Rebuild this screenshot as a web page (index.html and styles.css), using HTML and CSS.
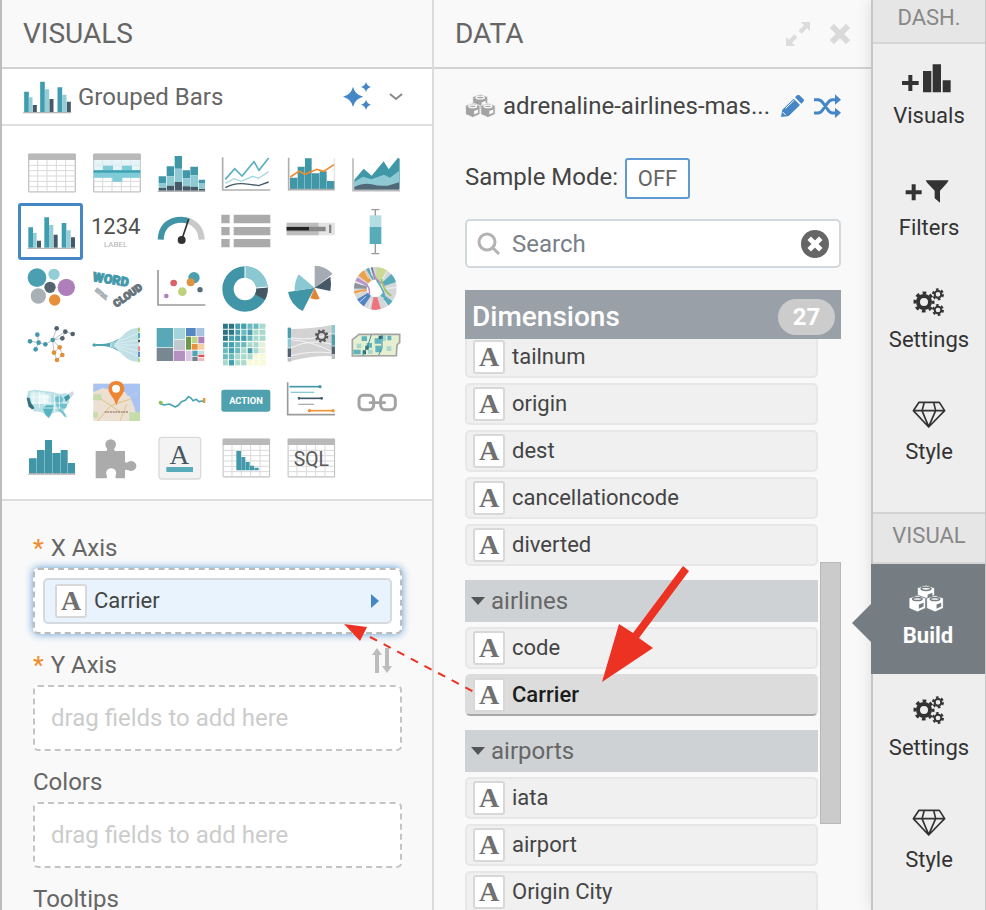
FILE: index.html
```html
<!DOCTYPE html>
<html lang="en">
<head>
<meta charset="utf-8">
<meta name="viewport" content="width=device-width, initial-scale=1">
<title>Visual Builder</title>
<link rel="stylesheet" href="styles.css">
</head>
<body>
<svg class="defs" aria-hidden="true">
  <defs>
    <symbol id="grouped" viewBox="52 212 146 102">
      <path fill="#3f9db0" d="M55 247h14v61H55zM103 217h14v91h-14zM155 234h14v74h-14z"/>
      <path fill="#94cdd6" d="M69 264h11v44H69zM117 240h13v68h-13zM169 256h13v52h-13z"/>
      <path fill="#455a68" d="M81 287h12v21H81zM131 269h12v39h-12zM183 277h12v31h-12z"/>
      <path fill="#b5b5b5" d="M52 308h144v4H52z"/>
    </symbol>
    <symbol id="table" viewBox="0 0 144 118">
      <rect x="2" y="2" width="140" height="114" rx="3" fill="#fff" stroke="#c4c4c4" stroke-width="4"/>
      <path d="M29 20v94M57 20v94M85 20v94M113 20v94M4 36h136M4 52h136M4 68h136M4 84h136M4 100h136" stroke="#d9d9d9" stroke-width="3" fill="none"/>
      <path d="M1 1h142v19H1z" fill="#b9b9b9"/>
    </symbol>
    <symbol id="cube" viewBox="-2 -2 58 58">
      <path class="cube-body" fill="currentColor" stroke-width="3" d="M27 0l27 9v33L27 54 0 42V9z"/>
      <ellipse class="cube-line" cx="27" cy="12" rx="15" ry="5" fill="none" stroke-width="5"/>
      <path class="cube-fill" d="M32 30l15-6v12l-15 7z"/>
    </symbol>
    <symbol id="cubes" viewBox="0 0 108 86">
      <use href="#cube" x="25" y="0" width="56" height="56"/>
      <use href="#cube" x="0" y="31" width="54" height="54"/>
      <use href="#cube" x="53" y="31" width="54" height="54"/>
    </symbol>
    <symbol id="gears" viewBox="147 864 180 96">
      <g fill="none" stroke="currentColor">
        <circle cx="222" cy="906" r="18" stroke-width="12"/>
        <circle cx="222" cy="906" r="27" stroke-width="9" stroke-dasharray="11 10.2" stroke-dashoffset="5"/>
        <circle cx="264" cy="883" r="10" stroke-width="6"/>
        <circle cx="264" cy="883" r="15" stroke-width="6" stroke-dasharray="8 7.7"/>
        <circle cx="264" cy="930" r="10" stroke-width="6"/>
        <circle cx="264" cy="930" r="15" stroke-width="6" stroke-dasharray="8 7.7"/>
      </g>
    </symbol>
    <symbol id="diamond" viewBox="147 1200 180 96">
      <path fill="none" stroke="currentColor" stroke-width="5" stroke-linejoin="round" d="M207 1207h61l16 25-48 49-46-49zM190 1232h94M223 1207l-7 25 20 48 21-48-6-25"/>
    </symbol>
  </defs>
</svg>

<main class="app">
  <section class="panel visuals">
    <header class="panel-head"><h2>VISUALS</h2></header>

    <div class="picker">
      <svg class="picker-icon" aria-hidden="true"><use href="#grouped"/></svg>
      <span class="picker-name">Grouped Bars</span>
      <button class="plain" aria-label="Suggest visuals">
        <svg width="28" height="30" viewBox="0 0 84 90" fill="#4586c6"><path d="M30 14q5 24 31 30-26 6-31 31-5-25-30-31 25-6 30-30zM69 0q3 12 15 15-12 3-15 16-3-13-15-16 12-3 15-15zM69 53q3 12 15 15-12 3-15 16-3-13-15-16 12-3 15-15z"/></svg>
      </button>
      <button class="plain chevron" aria-label="Show visual types">
        <svg width="14" height="8" viewBox="0 0 14 8"><path d="M1 1l6 5 6-5" fill="none" stroke="#888" stroke-width="2"/></svg>
      </button>
    </div>

    <div class="types">
      <button aria-label="Table"><svg viewBox="24 3 195 171"><use href="#table" x="54" y="25" width="144" height="118"/></svg></button>
      <button aria-label="Cross tabulation"><svg viewBox="219 3 195 171"><use href="#table" x="249" y="25" width="144" height="118"/><path fill="#d9f0f4" opacity=".7" d="M251 46h140v54H251z"/><path fill="#7fcbd7" d="M251 76h140v22H251zM279 62h30v14h-30zM336 62h30v14h-30zM307 98h30v12h-30z"/><path fill="#3fa3b3" d="M251 76h140v7H251z"/></svg></button>
      <button aria-label="Stacked bars"><svg viewBox="414 3 195 171"><path fill="#3f97a8" d="M446 94h22v20h-22zM470 64h22v30h-22zM494 33h22v38h-22zM518 76h22v24h-22zM541 65h23v26h-23zM566 104h19v10h-19z"/><path fill="#8fcad4" d="M446 114h22v16h-22zM470 94h22v28h-22zM494 71h22v40h-22zM518 100h22v24h-22zM541 91h23v34h-23zM566 114h19v18h-19z"/><path fill="#455a68" d="M446 129h22v8h-22zM470 122h22v15h-22zM494 111h22v26h-22zM518 124h22v13h-22zM541 125h23v12h-23zM566 132h19v5h-19z"/><path fill="#b5b5b5" d="M443 137h143v4H443z"/></svg></button>
      <button aria-label="Lines"><svg viewBox="9 3 195 171" fill="none" stroke-width="4"><path stroke="#b0b0b0" stroke-width="5" d="M38 37v98h143"/><path stroke="#58b0c0" stroke-width="5" d="M46 103l28-32 22 22 36-43 15 26 29-37"/><path stroke="#a6d8df" d="M46 115l26-14 22 8 34-15 18 6 30-20"/><path stroke="#455a68" d="M46 128q26-14 52-12t48 6l30-11"/></svg></button>
      <button aria-label="Combo"><svg viewBox="204 3 195 171"><path fill="#3f97a8" d="M240 98h22v36h-22zM263 65h21v69h-21zM285 40h20v94h-20zM306 85h22v49h-22zM329 79h21v55h-21zM351 108h23v26h-23z"/><path fill="none" stroke="#b0b0b0" stroke-width="5" d="M236 38v96h138"/><path fill="none" stroke="#ccc" stroke-width="2" d="M373 40v94"/><path fill="none" stroke="#f08c2e" stroke-width="5" d="M241 96l26-17 18 9 36-15 20 6 31-20"/></svg></button>
      <button aria-label="Areas"><svg viewBox="399 3 195 171"><path fill="#3f97a8" d="M433 104l28-33 24 21 36-43 15 24 28-35 5 3v92H433z"/><path fill="#8fcad4" d="M433 111l26-16 25 8 38-14 18 9 27-20v56H433z"/><path fill="#526877" d="M433 126q30-14 52-8t48 4l34-10v22H433z"/><path fill="none" stroke="#bbb" stroke-width="5" d="M429 40v97h141"/></svg></button>

      <button class="selected" aria-label="Grouped bars" aria-pressed="true"><svg viewBox="24 174 195 171"><use href="#grouped" x="52" y="212" width="146" height="102"/></svg></button>
      <button aria-label="KPI"><svg viewBox="219 174 195 171"><text x="317" y="268" font-size="66" fill="#505050" text-anchor="middle">1234</text><text x="317" y="305" font-size="24" fill="#b0b0b0" text-anchor="middle">LABEL</text></svg></button>
      <button aria-label="Gauge"><svg viewBox="414 174 195 171" fill="none"><path stroke="#c9c9c9" stroke-width="18" d="M536 227q38 16 39 57"/><path stroke="#4094a6" stroke-width="18" d="M452 284q2-50 50-59 18-3 34 3"/><path stroke="#333" stroke-width="5" d="M515 285l21-62"/><circle cx="515" cy="285" r="12" fill="#333"/></svg></button>
      <button aria-label="List"><svg viewBox="9 174 195 171" fill="#ababab"><path d="M34 209h25v26H34zM71 209h110v26H71zM34 246h25v25H34zM71 246h110v25H71zM34 282h25v25H34zM71 282h110v25H71z"/></svg></button>
      <button aria-label="Bullet"><svg viewBox="204 174 195 171"><path fill="#e4e4e4" d="M230 233h145v38H230z"/><path fill="#bdbdbd" d="M230 233h96v38h-96z"/><path fill="#888" d="M230 245h117v14H230z"/><path fill="#222" d="M230 246h67v10h-67z"/><path fill="#888" d="M357 239h7v25h-7z"/></svg></button>
      <button aria-label="Box plot"><svg viewBox="399 174 195 171"><path fill="none" stroke="#999" stroke-width="4" d="M496 194v132M484 194h24M484 326h24"/><path fill="#b4dde3" d="M479 211h35v35h-35z"/><path fill="#58abb9" d="M479 246h35v51h-35z"/></svg></button>

      <button aria-label="Packed bubbles"><svg viewBox="24 345 195 171"><circle cx="81" cy="398" r="28" fill="#4a9fb0"/><circle cx="132" cy="388" r="17" fill="#93cdd6"/><circle cx="120" cy="427" r="17" fill="#55656f"/><circle cx="169" cy="427" r="26" fill="#ae7fbb"/><circle cx="85" cy="453" r="23" fill="#a9b0b6"/><circle cx="134" cy="465" r="17" fill="#e88f3a"/></svg></button>
      <button aria-label="Word cloud"><svg viewBox="219 345 195 171" font-weight="900" stroke-width="3"><text transform="translate(247 408) rotate(9)" font-size="38" fill="#4499aa" stroke="#4499aa">WORD</text><text transform="translate(319 488) rotate(-35)" font-size="31" fill="#66737d" stroke="#66737d">CLOUD</text><text transform="translate(254 437) rotate(40)" font-size="16" fill="#aab2b8" stroke="#aab2b8">HTML</text></svg></button>
      <button aria-label="Scatter"><svg viewBox="414 345 195 171"><path fill="none" stroke="#9b9b9b" stroke-width="5" d="M444 375v105h142"/><circle cx="552" cy="398" r="17" fill="#4a9fb0"/><circle cx="542" cy="412" r="12" fill="#dc9440"/><circle cx="491" cy="414" r="10" fill="#d9626a"/><circle cx="517" cy="440" r="13" fill="#bfd27d"/><circle cx="570" cy="434" r="8" fill="#566a78"/><circle cx="469" cy="453" r="7" fill="#b37cc0"/></svg></button>
      <button aria-label="Donut"><svg viewBox="9 345 195 171" fill="none" stroke-width="34"><circle cx="105" cy="432" r="51" stroke="#4095a7"/><path stroke="#8bc8d2" d="M105 381a51 51 0 0 1 51 48"/><path stroke="#455663" d="M156 428a51 51 0 0 1-6 28"/><path stroke="#fff" stroke-width="3" d="M105 364v36M138 429l34-3"/></svg></button>
      <button aria-label="Radial"><svg viewBox="204 345 195 171"><path fill="#a4abb2" d="M314 428v-66q30 0 54 24z"/><path fill="#465865" d="M314 428l47-33q4 20 0 43z"/><path fill="#e38634" d="M314 428l15 34q-14 3-28-2z"/><path fill="#4095a7" d="M314 428l-36 70q-36-18-44-57z"/><path fill="#8bc8d2" d="M314 428l-60 10q-2-26 12-50z"/></svg></button>
      <button aria-label="Chord"><svg viewBox="399 345 195 171" fill="none"><circle cx="496" cy="430" r="45" stroke="#d3d7da" stroke-width="38"/><g stroke-width="38"><path stroke="#c9da94" d="M499 385a45 45 0 0 1 22 8"/><path stroke="#58abb9" d="M530 400a45 45 0 0 1 10 17"/><path stroke="#58abb9" d="M532 457a45 45 0 0 1-9 9"/><path stroke="#ef7480" d="M507 474a45 45 0 0 1-20 1"/><path stroke="#4f83c2" d="M472 468a45 45 0 0 1-14-15"/><path stroke="#eda04c" d="M453 443a45 45 0 0 1-2-8"/><path stroke="#8d949a" d="M451 431a45 45 0 0 1 2-12"/><path stroke="#bb91c8" d="M454 415a45 45 0 0 1 4-7"/><path stroke="#eda04c" d="M460 403a45 45 0 0 1 14-12"/><path stroke="#58abb9" d="M478 389a45 45 0 0 1 6-3"/><path stroke="#7f6f96" d="M488 386a45 45 0 0 1 4-1"/></g><path stroke="#fff" stroke-width="2" d="M434 410l25 10M462 374l14 26M480 368l6 24M530 378l-12 24M560 428l-30 2M532 482l-14-26M476 490l8-26M448 472l20-18M434 448l24-8"/><path stroke="#bb91c8" stroke-width="5" d="M462 414q20 10 16 34M492 384q0 20 32 36"/><path stroke="#9fc45f" stroke-width="5" d="M544 452q-24-12-30-50"/><path stroke="#58abb9" stroke-width="5" d="M524 466q2-26-24-60"/></svg></button>

      <button aria-label="Network"><svg viewBox="24 6 195 171"><path fill="none" stroke="#bbc3c8" stroke-width="3" d="M60 79l26 4 20 5 22-13 12-35M82 59l4 24-9 20M128 75l38-25 22 7M128 75l29-5M128 75l4 38 9 22M128 75l21 22 8 23M132 113l17-16M140 135l17-15M166 50l-9 20"/><g fill="#4199aa"><circle cx="60" cy="79" r="7"/><circle cx="82" cy="59" r="7"/><circle cx="86" cy="83" r="7"/><circle cx="77" cy="103" r="7"/><circle cx="106" cy="88" r="7"/><circle cx="128" cy="75" r="7"/></g><g fill="#526270"><circle cx="140" cy="40" r="7"/><circle cx="166" cy="50" r="7"/><circle cx="188" cy="57" r="7"/><circle cx="157" cy="70" r="7"/></g><g fill="#e58e38"><circle cx="149" cy="97" r="7"/><circle cx="132" cy="113" r="7"/><circle cx="157" cy="120" r="7"/><circle cx="141" cy="135" r="7"/></g></svg></button>
      <button aria-label="Dendrogram"><svg viewBox="219 6 195 171"><path fill="#c0e0e6" d="M275 88q45-2 70-33 16-16 42-17v102q-30 0-46-18-24-28-66-30z"/><path fill="#4fa3b3" d="M248 87h26q30-1 52-16-14 18-14 20t14 18q-22-16-52-16h-26z"/><path fill="none" stroke="#e9f5f7" stroke-width="2" d="M300 86q40-10 86-32M300 88q46-6 86-14M300 90h86M300 92q46 4 86 16M300 94q40 8 86 30"/><circle cx="253" cy="90" r="5" fill="#4fa3b3"/><g stroke-width="6"><path stroke="#a9cf6b" d="M387 38v12"/><path stroke="#58abb9" d="M387 54v16"/><path stroke="#555" d="M387 74v8"/><path stroke="#e98d93" d="M387 94v14"/><path stroke="#5f8fc9" d="M387 110v16"/><path stroke="#b5d78a" d="M387 130v12"/></g></svg></button>
      <button aria-label="Treemap"><svg viewBox="414 6 195 171"><path fill="#58a8b7" d="M440 39h49v58h-49z"/><path fill="#788893" d="M440 99h49v39h-49z"/><path fill="#a3d4dc" d="M491 39h34v33h-34z"/><path fill="#c2c9ce" d="M491 74h34v31h-34z"/><path fill="#b591c1" d="M491 107h34v31h-34z"/><path fill="#5587c2" d="M528 39h29v24h-29z"/><path fill="#a9c3e2" d="M559 39h24v24h-24z"/><path fill="#6b9a4c" d="M528 65h15v39h-15z"/><path fill="#bdd48b" d="M545 65h18v20h-18z"/><path fill="#ae7fbb" d="M565 65h18v20h-18z"/><path fill="#e9913d" d="M545 87h18v17h-18z"/><path fill="#f5cfa0" d="M565 87h18v17h-18z"/><path fill="#dcc7e3" d="M528 107h17v31h-17z"/><path fill="#4fa3b3" d="M547 107h16v16h-16z"/><path fill="#bfe0e5" d="M565 107h18v10h-18z"/><path fill="#d9525a" d="M565 119h18v7h-18z"/><path fill="#71828d" d="M547 125h16v13h-16z"/><path fill="#f1b9bd" d="M565 128h18v10h-18z"/></svg></button>
      <button aria-label="Heatmap"><svg viewBox="9 6 195 171" fill="none" stroke-width="15"><path stroke="#e4f1d8" d="M39 34h127M39 52h127M39 70h127M39 89h127M39 107h127M39 125h127M39 143h127"/><path stroke="#a9d8cc" d="M113 34h53M94 52h72M94 70h72M76 89h72M76 107h72M57 125h72M57 143h52M39 125h18M39 143h18"/><path stroke="#6bbac0" d="M76 34h72M94 52h36M57 70h72M57 89h52M39 107h52M39 125h36M57 143h15"/><path stroke="#469fae" d="M76 34h33M113 52h15M76 52h15M57 70h33M39 89h33M57 107h15M113 107h15M57 143h15M94 70h15"/><path stroke="#2f7384" d="M39 34h33M39 52h33M39 70h15"/><path stroke="#f8fad8" d="M131 125h35M113 143h53"/><path stroke="#fff" stroke-width="3" d="M55 24v130M74 24v130M92 24v130M111 24v130M129 24v130M147 24v130"/></svg></button>
      <button aria-label="Flow"><svg viewBox="204 6 195 171"><path fill="#d3d3d3" d="M243 42q60 0 124-12v94q-50-4-124 14z"/><path fill="none" stroke="#f5f5f5" stroke-width="3" d="M243 68q60 12 124-14M243 98q60-28 124-10M243 74q60 4 124 36M243 122q60-16 124-8"/><g stroke-width="10"><path stroke="#4a9fb0" d="M238 38v32"/><path stroke="#8bc8d2" d="M238 72v26"/><path stroke="#526270" d="M238 100v26"/><path stroke="#b9c0c5" d="M238 128v12"/><path stroke="#8bc8d2" d="M370 30v26"/><path stroke="#4a9fb0" d="M370 58v34"/><path stroke="#526270" d="M370 94v24"/><path stroke="#b9c0c5" d="M370 120v12"/></g><circle cx="335" cy="63" r="12" fill="none" stroke="#555" stroke-width="6"/><circle cx="335" cy="63" r="17" fill="none" stroke="#555" stroke-width="6" stroke-dasharray="7 6.35"/></svg></button>
      <button aria-label="Choropleth"><svg viewBox="399 6 195 171"><path fill="#e6efd0" stroke="#a3a3a3" stroke-width="5" d="M427 74l8-6 12-10h122v24l-8 8-2 32-132 1z"/><path fill="#5fb3bd" d="M455 64h16v14h-16zM470 84h16v14h-16zM430 104h22v14h-22zM494 70h20v16h-20zM532 62h12v14h-12zM496 92h18v20h-18z"/><path fill="#a9d8cc" d="M440 86h14v14h-14zM516 60h12v18h-12zM474 104h14v12h-14zM530 94h14v14h-14z"/><path fill="#2b6676" d="M506 62h12v10h-12zM466 92h10v12h-10zM458 106h10v12h-10z"/><path fill="none" stroke="#3f8f9d" stroke-width="3" d="M484 60l-10 30-16 32M516 60v40l-10 20"/></svg></button>

      <button aria-label="Map"><svg viewBox="24 177 195 171"><path fill="#b8e0e6" d="M54 229l20-5 54 7 20 6 18-2 10 2 12-10-2 14-10 10 2 10-12 16-4 14 10 14-2 4-12-16-18-2-12 4-10 14-10-10-14-8-22-2-18-20-4-16z"/><path fill="#d9eff2" d="M60 232h42v34H66z"/><path fill="#ecf7f8" d="M88 238h28v28H88z"/><path fill="#35707c" d="M50 248h8l4 14 12 18-8 3-10-8z"/><path fill="#58b4c1" d="M98 279l12-8h20v10l-6 14-8 14-10-10z"/><path fill="#6fc0cb" d="M134 248l16-8 10 12-4 12 16 4-4 12-16 2 14 16v10l-14-18-8-4-6-20z"/><path fill="#3f99a8" d="M162 246l16-8 2 12-12 10z"/><path fill="#d5dadd" d="M176 238l14-8 2 6-10 14z"/><path fill="none" stroke="#fff" stroke-width="2" d="M72 228l-2 40M88 230v48M104 232v40M120 234v36M134 236v58M148 240v44M60 246h60M64 264h104M98 279h56"/></svg></button>
      <button aria-label="Interactive map"><svg viewBox="219 177 195 171"><path fill="#ece0d2" d="M250 206h140v112H250z"/><path fill="#a9c4f2" d="M250 206h140v54l-10-26-26 10-8-12-30-8-40-4-26 12z"/><path fill="#a9c4f2" d="M358 240l32-6v74q-14-12-18-34z"/><path fill="#c5dcab" d="M250 238h24v18h-24zM358 292h32v26h-32zM250 292h14v16h-14z"/><path fill="none" stroke="#e3c37f" stroke-width="3" d="M262 318l40-46 60-20M330 318l20-50M270 250l60 40"/><path fill="none" stroke="#a58b77" stroke-width="5" stroke-dasharray="6 2" d="M284 291h70"/><path fill="#ef8433" d="M319 271q-6-20-17-32-8-9-7-19 3-22 24-22t24 22q1 10-7 19-11 12-17 32z"/><circle cx="318" cy="221" r="12" fill="#fff"/></svg></button>
      <button aria-label="Sparkline"><svg viewBox="414 177 195 171"><path fill="none" stroke="#4ba4b2" stroke-width="5" stroke-linejoin="round" d="M450 265l12 5 16-3 18 9 10-6 8-10 12-4 9-11 8 4 6 8 10-4 8 7 10-2 8 4"/><circle cx="452" cy="263" r="6" fill="#8cc152"/><path fill="#ef9434" d="M579 249h7v14h-7z"/></svg></button>
      <button aria-label="Action"><svg viewBox="9 177 195 171"><rect x="34" y="224" width="147" height="66" rx="7" fill="#4fa1b0"/><text x="108" y="267" font-size="28" font-weight="700" fill="#fff" text-anchor="middle">ACTION</text></svg></button>
      <button aria-label="Timeline"><svg viewBox="204 177 195 171" fill="none" stroke-width="4"><path stroke="#9b9b9b" stroke-width="5" d="M233 202v97h142"/><path stroke="#4199aa" stroke-width="5" d="M238 215h94"/><path stroke="#8bc8d2" d="M242 232h71"/><path stroke="#455a68" stroke-width="5" d="M265 250h72"/><path stroke="#a9b0b6" d="M265 268h47"/><path stroke="#ef9434" stroke-width="5" d="M296 287h74"/><circle cx="330" cy="215" r="3" stroke="#4199aa"/><circle cx="298" cy="287" r="3" stroke="#ef9434"/><circle cx="369" cy="287" r="3" stroke="#ef9434"/><circle cx="335" cy="250" r="2" stroke="#455a68"/><circle cx="267" cy="250" r="2" stroke="#455a68"/></svg></button>
      <button aria-label="Link"><svg viewBox="399 177 195 171" fill="none" stroke="#a3a3a3" stroke-width="9"><rect x="447" y="241" width="44" height="43" rx="13"/><rect x="512" y="241" width="44" height="43" rx="13"/><path d="M480 263h44" stroke="#a3a3a3" stroke-width="8" stroke-linecap="round"/></svg></button>

      <button aria-label="Histogram"><svg viewBox="24 348 195 171" fill="#4095a7"><path d="M57 430h23v46H57zM81 405h23v71H81zM105 375h21v101h-21zM127 414h24v62h-24zM152 405h21v71h-21zM174 444h21v32h-21z"/><path fill="#b0b0b0" d="M55 475h141v4H55z"/></svg></button>
      <button aria-label="Extension"><svg viewBox="219 348 195 171"><path fill="#ababab" d="M257 408h32q4-4 2-8a16 16 0 1 1 22 0q-2 4 2 8h30v32q3 5 10 0a16 15 0 1 1 0 26q-7-4-10 0v24h-27q-4-3-1-9a15 15 0 1 0-27 0q3 6-1 9h-32z"/></svg></button>
      <button aria-label="Rich text"><svg viewBox="414 348 195 171"><rect x="447" y="367" width="125" height="125" rx="9" fill="#f3f3f3" stroke="#dadada" stroke-width="4"/><text class="serif" x="508" y="446" font-size="82" fill="#455663" text-anchor="middle">A</text><path fill="#58abb9" d="M469 456h80v15h-80z"/></svg></button>
      <button aria-label="Frequency table"><svg viewBox="9 348 195 171"><use href="#table" x="37" y="370" width="144" height="118"/><path fill="#4199aa" d="M79 408h14v58H79zM94 426h12v40H94zM107 441h12v25h-12zM120 452h12v14h-12zM133 458h13v8h-13z"/></svg></button>
      <button aria-label="SQL"><svg viewBox="204 348 195 171"><use href="#table" x="232" y="370" width="144" height="118"/><text x="304" y="454" font-size="58" fill="#5a5a5a" text-anchor="middle">SQL</text></svg></button>
    </div>

    <div class="shelves">
      <section class="shelf">
        <h3><span class="req">*</span>X Axis</h3>
        <div class="drop active">
          <div class="pill">
            <span class="kind" aria-hidden="true">A</span>
            <span class="pill-name">Carrier</span>
            <svg width="8" height="14" viewBox="0 0 8 14" aria-hidden="true"><path fill="#4586c6" d="M0 0l8 7-8 7z"/></svg>
          </div>
        </div>
      </section>
      <section class="shelf">
        <div class="shelf-head">
          <h3><span class="req">*</span>Y Axis</h3>
          <button class="plain" aria-label="Swap axes">
            <svg width="20" height="26" viewBox="0 0 20 26" fill="#bcbcbc"><path d="M0 7l5-7 5 7H7v18H3V7zM20 18l-5 7-5-7h3V0h4v18z"/></svg>
          </button>
        </div>
        <div class="drop">drag fields to add here</div>
      </section>
      <section class="shelf">
        <h3>Colors</h3>
        <div class="drop">drag fields to add here</div>
      </section>
      <section class="shelf">
        <h3>Tooltips</h3>
      </section>
    </div>
  </section>

  <section class="panel data">
    <header class="panel-head">
      <h2>DATA</h2>
      <button class="plain" aria-label="Expand panel">
        <svg width="24" height="24" viewBox="0 0 72 72" fill="#dcdcdc"><path d="M44 0h28v28l-9-9-16 16-9-9 16-16zM28 72H0V44l9 9 16-16 9 9-16 16z"/></svg>
      </button>
      <button class="plain" aria-label="Close panel">
        <svg width="20" height="20" viewBox="0 0 20 20"><path d="M4 4l12 12M16 4L4 16" stroke="#dadada" stroke-width="6" stroke-linecap="square"/></svg>
      </button>
    </header>

    <div class="data-body">
      <div class="dataset">
        <svg class="cubes-gray" width="31" height="26" aria-hidden="true"><use href="#cubes"/></svg>
        <span class="dataset-name">adrenaline-airlines-mas...</span>
        <button class="plain" aria-label="Edit dataset">
          <svg width="23" height="22" viewBox="0 0 69 66"><path fill="#4586c6" d="M0 66l4-22 34-33 19 19-34 33zM42 7l6-6q5-3 9 1l10 10q4 4 0 8l-6 6z"/><path fill="none" stroke="#fff" stroke-width="3" d="M14 40l26-25M5 51l9 9"/></svg>
        </button>
        <button class="plain" aria-label="Change dataset">
          <svg width="27" height="24" viewBox="0 0 81 72"><path fill="none" stroke="#4586c6" stroke-width="9" d="M0 17h12q9 0 16 11l12 17q7 12 16 12h10M0 57h12q9 0 16-12l12-17q7-11 16-11h10"/><path fill="#4586c6" d="M63 1l18 16-18 15zM63 41l18 15-18 16z"/></svg>
        </button>
      </div>

      <div class="sample">
        <span id="sample-label">Sample Mode:</span>
        <button class="toggle" aria-describedby="sample-label">OFF</button>
      </div>

      <div class="search">
        <svg width="24" height="24" viewBox="0 0 24 24" fill="none" stroke="#b3b3b3" stroke-width="3" aria-hidden="true"><circle cx="10" cy="10" r="8"/><path d="M16 16l6 6"/></svg>
        <input type="text" placeholder="Search" aria-label="Search">
        <button class="plain" aria-label="Clear search">
          <svg width="28" height="28" viewBox="0 0 28 28"><circle cx="14" cy="14" r="14" fill="#666"/><path d="M10 10l8 8M18 10l-8 8" stroke="#fff" stroke-width="5" stroke-linecap="square"/></svg>
        </button>
      </div>

      <div class="dims-head"><h3>Dimensions</h3><span class="count">27</span></div>
      <div class="dims">
        <div class="dims-list">
          <ul>
            <li><span class="kind" aria-hidden="true">A</span>tailnum</li>
            <li><span class="kind" aria-hidden="true">A</span>origin</li>
            <li><span class="kind" aria-hidden="true">A</span>dest</li>
            <li><span class="kind" aria-hidden="true">A</span>cancellationcode</li>
            <li><span class="kind" aria-hidden="true">A</span>diverted</li>
          </ul>
          <button class="group">airlines</button>
          <ul>
            <li><span class="kind" aria-hidden="true">A</span>code</li>
            <li class="hover"><span class="kind" aria-hidden="true">A</span>Carrier</li>
          </ul>
          <button class="group">airports</button>
          <ul>
            <li><span class="kind" aria-hidden="true">A</span>iata</li>
            <li><span class="kind" aria-hidden="true">A</span>airport</li>
            <li><span class="kind" aria-hidden="true">A</span>Origin City</li>
          </ul>
        </div>
        <div class="track" aria-hidden="true"><div class="thumb"></div></div>
      </div>
    </div>
  </section>

  <nav class="rail">
    <h4 class="first">DASH.</h4>
    <button class="tab"><svg viewBox="147 192 180 96" aria-hidden="true"><path d="M175 225h12v18h19v12h-19v18h-12v-18h-19v-12h19zM219 213h25v64h-25zM248 193h25v84h-25zM278 241h24v36h-24z"/></svg>Visuals</button>
    <button class="tab"><svg viewBox="147 528 180 96" aria-hidden="true"><path d="M185 553h12v18h18v12h-18v18h-12v-18h-18v-12h18zM227 541h69l-5 8-21 23v36l-16-13v-23l-22-23z"/></svg>Filters</button>
    <button class="tab"><svg aria-hidden="true"><use href="#gears"/></svg>Settings</button>
    <button class="tab"><svg aria-hidden="true"><use href="#diamond"/></svg>Style</button>
    <h4>VISUAL</h4>
    <button class="tab current" aria-current="page"><svg viewBox="147 312 180 96" aria-hidden="true"><use href="#cubes" x="178" y="313" width="108" height="86"/></svg>Build</button>
    <button class="tab"><svg aria-hidden="true"><use href="#gears"/></svg>Settings</button>
    <button class="tab"><svg aria-hidden="true"><use href="#diamond"/></svg>Style</button>
  </nav>

  <svg class="arrows" width="986" height="910" viewBox="0 0 986 910" aria-hidden="true">
    <path fill="#ec3323" d="M683 566l6 5-50 67 14 10-51 34 17-58 14 9zM344 624l23 3-7 14z"/>
    <path fill="none" stroke="#ec3323" stroke-width="2" stroke-dasharray="8 7.4" d="M370 637l104 55"/>
  </svg>
</main>
</body>
</html>
```
FILE: styles.css
```css
* { box-sizing: border-box; }

body {
  margin: 0;
  font-family: Roboto, "Liberation Sans", sans-serif;
  font-size: 24px;
  line-height: 28px;
  color: #666;
  background: #f9f9f9;
}

h2, h3, h4, ul { margin: 0; padding: 0; font-weight: 400; }
h2 { font-size: 28px; line-height: 34px; }
h3 { font-size: 24px; }
ul { list-style: none; }
button { font: inherit; color: inherit; cursor: pointer; }
svg { display: block; flex: none; }
.defs { position: absolute; width: 0; height: 0; }

.plain { padding: 0; border: 0; background: none; }

.app {
  --gap: #f9f9f9;
  position: relative;
  display: grid;
  grid-template-columns: minmax(0, 432fr) minmax(0, 437fr) 115px;
  height: 100vh;
  overflow: hidden;
  border-left: 2px solid #bdbdbd;
}

.panel { display: flex; flex-direction: column; min-height: 0; overflow: hidden; }
.visuals { border-right: 2px solid #dcdcdc; }

.panel-head {
  display: flex;
  flex: none;
  align-items: center;
  gap: 20px;
  height: 69px;
  padding: 0 21px;
  border-bottom: 2px solid #d2d2d2;
}
.panel-head h2 { flex: 1; }

/* Current visual type */
.picker {
  display: flex;
  flex: none;
  align-items: center;
  gap: 6px;
  height: 57px;
  padding: 0 29px 0 21px;
  background: #fff;
  border-bottom: 2px solid #dedede;
}
.picker-icon { width: 49px; height: 34px; }
.picker-name { flex: 1; }
.chevron { margin-left: 12px; }

/* Visual type gallery */
.types {
  display: grid;
  flex: none;
  grid-template-columns: repeat(6, 1fr);
  grid-auto-rows: 57px;
  padding: 20px 24px 11px 16px;
  background: #fff;
  border-bottom: 2px solid #dedede;
}
.types button { padding: 0; border: 0; border-radius: 3px; background: none; }
.types button > svg { width: 100%; height: 57px; }
.types .selected { box-shadow: inset 0 0 0 3px #4586c6; }
.serif { font-family: "Liberation Serif", serif; }

/* Shelves */
.shelves { padding: 33px 30px 0 31px; }
.shelf { margin-bottom: 17px; }
.shelf h3 { margin-bottom: 6px; }
.shelf-head { display: flex; justify-content: space-between; align-items: flex-start; padding-right: 10px; }
.shelf-head button { height: 28px; margin-top: -4px; }
.req { margin-right: 7px; color: #f08c2e; font-weight: 500; }
.drop {
  display: flex;
  align-items: center;
  height: 66px;
  padding: 0 16px;
  border: 2px dashed #c4c4c4;
  border-radius: 5px;
  background: #fff;
  color: #ccc;
}
.drop.active {
  padding: 0 8px;
  border-color: #bbb;
  box-shadow: 0 0 8px #5b9bd5;
}
.pill {
  display: flex;
  flex: 1;
  align-items: center;
  gap: 7px;
  height: 46px;
  padding: 0 11px 0 10px;
  border: 2px solid #d6dadd;
  border-radius: 5px;
  background: #e8f3fd;
  color: #444;
  font-size: 22px;
}
.pill-name { flex: 1; }
.kind {
  flex: none;
  width: 32px;
  height: 34px;
  border: 2px solid #d8d8d8;
  border-radius: 3px;
  background: #fff;
  color: #707070;
  font: 700 28px/30px "Liberation Serif", serif;
  text-align: center;
}

/* Data panel */
.data-body {
  display: flex;
  flex: 1;
  flex-direction: column;
  min-height: 0;
  padding: 22px 30px 0 31px;
  color: #444;
}
.dataset { display: flex; flex: none; align-items: center; gap: 10px; height: 30px; margin-bottom: 37px; }
.dataset-name { flex: 1; min-width: 0; margin-left: -3px; overflow: hidden; white-space: nowrap; }
.cubes-gray { color: #a3a3a3; }
.cube-body, .cube-line { stroke: var(--gap); }
.cube-fill { fill: var(--gap); }

.sample { display: flex; align-items: center; gap: 7px; margin-bottom: 20px; }
.sample span { padding-bottom: 4px; }
.toggle {
  width: 65px;
  height: 41px;
  padding: 0;
  border: 2px solid #5f9ad3;
  border-radius: 3px;
  background: #fff;
  color: #666;
  font-size: 22px;
}

.search {
  display: flex;
  flex: none;
  align-items: center;
  gap: 11px;
  height: 49px;
  margin-bottom: 22px;
  padding: 0 10px;
  border: 2px solid #d3d8dd;
  border-radius: 5px;
  background: #fff;
}
.search input { flex: 1; min-width: 0; padding: 0; border: 0; outline: 0; background: none; font: inherit; color: #6f7780; }
.search input::placeholder { color: #78808a; opacity: 1; }

.dims-head {
  position: relative;
  z-index: 1;
  display: flex;
  flex: none;
  align-items: center;
  justify-content: space-between;
  height: 49px;
  padding: 4px 6px 0 7px;
  background: #9aa0a8;
  color: #fff;
}
.dims-head h3 { font-size: 28px; font-weight: 500; line-height: 34px; }
.count {
  width: 57px;
  border-radius: 18px;
  background: #ccc;
  font-weight: 700;
  line-height: 36px;
  text-align: center;
}
.dims { display: flex; flex: 1; gap: 2px; min-height: 0; overflow: hidden; }
.dims-list { flex: 1; margin-top: -3px; font-size: 22px; }
.dims-list ul { display: grid; gap: 5px; }
.dims-list li {
  display: flex;
  align-items: center;
  gap: 7px;
  height: 42px;
  padding-left: 6px;
  border: 2px solid #e7e7e7;
  border-radius: 5px;
  background: #f0f0f0;
}
.dims-list .hover {
  border-color: #dcdcdc #dcdcdc #a9a9a9;
  background: #dcdcdc;
  color: #1c1c1c;
  font-weight: 500;
}
.group {
  display: flex;
  align-items: center;
  gap: 6px;
  width: 100%;
  height: 42px;
  margin: 14px 0 5px;
  padding: 0 6px;
  border: 0;
  background: #ced2d5;
  color: #666;
  font-size: 24px;
}
.group::before {
  content: "";
  border: 7px solid transparent;
  border-top: 8px solid #555;
  border-bottom: 0;
}
.track { position: relative; flex: none; width: 21px; }
.thumb {
  position: absolute;
  top: 223px;
  width: 100%;
  height: 262px;
  border: 1px solid #b8b8b8;
  background: #cbcbcb;
}

/* Right rail */
.rail {
  z-index: 1;
  border: solid #c6c6c6;
  border-width: 0 1px 0 2px;
  background: #eee;
  box-shadow: 0 0 14px rgba(0, 0, 0, 0.12);
  font-size: 22px;
  line-height: 26px;
}
.rail h4 {
  height: 52px;
  margin-top: 20px;
  padding-top: 9px;
  border-top: 2px solid #d2d2d2;
  border-bottom: 2px solid #d6d6d6;
  background: #e6e6e6;
  color: #888;
  font-size: 22px;
  text-align: center;
}
.rail .first { height: 44px; margin-top: 0; padding-top: 5px; border-top: 0; }
.tab {
  position: relative;
  display: flex;
  flex-direction: column;
  align-items: center;
  gap: 7px;
  width: 100%;
  height: 112px;
  padding: 20px 0 0;
  border: 0;
  background: none;
  color: #333;
  line-height: 26px;
}
.tab svg { width: 60px; height: 32px; fill: currentColor; }
.current {
  --gap: #757d83;
  width: calc(100% + 2px);
  height: 110px;
  margin: 0 0 2px -2px;
  background: #757d83;
  color: #fff;
  font-weight: 700;
}
.current::before {
  content: "";
  position: absolute;
  top: 40px;
  right: 100%;
  border: 19px solid transparent;
  border-right-color: #757d83;
  border-left: 0;
}

/* Callout arrows laid over the panels */
.arrows { position: absolute; top: 0; left: -2px; z-index: 2; pointer-events: none; }
```
